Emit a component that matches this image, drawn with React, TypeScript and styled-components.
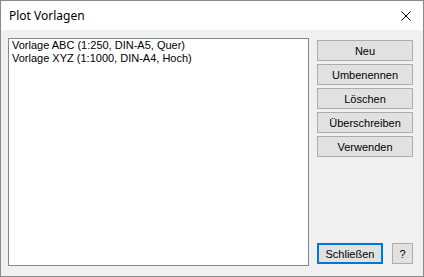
import React from "react";
import styled, { createGlobalStyle } from "styled-components";

const Global = createGlobalStyle`
  html, body { margin: 0; padding: 0; background: #ffffff; }
  * { box-sizing: border-box; }
`;

const Window = styled.div`
  width: 424px;
  height: 277px;
  border: 1px solid #8a8a8a;
  display: flex;
  flex-direction: column;
  background: #f0f0f0;
  font-family: "Liberation Sans", Arial, sans-serif;
  font-size: 11px;
  color: #000;
`;

const TitleBar = styled.div`
  height: 29px;
  flex: none;
  background: #ffffff;
  display: flex;
  align-items: center;
  justify-content: space-between;
  padding-left: 8px;
`;

const Title = styled.span`
  font-family: "Noto Sans", "Segoe UI", sans-serif;
  font-size: 12px;
  color: #000;
  margin-top: -1px;
`;

const CloseButton = styled.div`
  width: 46px;
  height: 29px;
  display: flex;
  align-items: center;
  justify-content: center;
  padding-left: 12px;
`;

const Body = styled.div`
  flex: 1;
  display: flex;
  padding: 8px 10px 10px 7px;
  gap: 8px;
`;

const ListBox = styled.div`
  width: 301px;
  flex: none;
  background: #ffffff;
  border: 1px solid #828790;
  padding: 0 3px;
`;

const ListItem = styled.div`
  height: 13px;
  line-height: 13px;
  white-space: nowrap;
`;

const Side = styled.div`
  flex: 1;
  display: flex;
  flex-direction: column;
  padding-top: 2px;
  padding-bottom: 2px;
`;

const ButtonStack = styled.div`
  display: flex;
  flex-direction: column;
  gap: 3px;
`;

const Button = styled.div<{ $width?: number; $default?: boolean }>`
  height: 21px;
  width: ${(p) => (p.$width ? `${p.$width}px` : "100%")};
  background: #e1e1e1;
  border: ${(p) => (p.$default ? "2px solid #0078d7" : "1px solid #adadad")};
  display: flex;
  align-items: center;
  justify-content: center;
  white-space: nowrap;
`;

const BottomRow = styled.div`
  margin-top: auto;
  display: flex;
  justify-content: space-between;
`;

export default function App() {
  return (
    <>
      <Global />
      <Window>
        <TitleBar>
          <Title>Plot Vorlagen</Title>
          <CloseButton>
            <svg width="10" height="10" viewBox="0 0 10 10">
              <path d="M0.5 0.5 L9.5 9.5 M9.5 0.5 L0.5 9.5" stroke="#000" strokeWidth="1" />
            </svg>
          </CloseButton>
        </TitleBar>
        <Body>
          <ListBox>
            <ListItem>Vorlage ABC (1:250, DIN-A5, Quer)</ListItem>
            <ListItem>Vorlage XYZ (1:1000, DIN-A4, Hoch)</ListItem>
          </ListBox>
          <Side>
            <ButtonStack>
              <Button>Neu</Button>
              <Button>Umbenennen</Button>
              <Button>Löschen</Button>
              <Button>Überschreiben</Button>
              <Button>Verwenden</Button>
            </ButtonStack>
            <BottomRow>
              <Button $width={66} $default>Schließen</Button>
              <Button $width={21}>?</Button>
            </BottomRow>
          </Side>
        </Body>
      </Window>
    </>
  );
}
